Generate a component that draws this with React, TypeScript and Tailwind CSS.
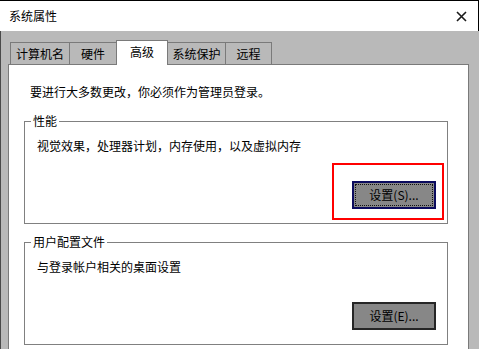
import React from "react";

const font = { fontFamily: '"Noto Sans CJK SC", "Microsoft YaHei", sans-serif' };

function Tab({ label, className }: { label: string; className: string }) {
  return (
    <div className={`flex items-center justify-center border-t border-[#7a7a7a] text-[12px] leading-[16px] text-black ${className}`}>
      {label}
    </div>
  );
}

function GroupBox({
  title,
  text,
  button,
  focused,
  className,
}: {
  title: string;
  text: string;
  button: string;
  focused?: boolean;
  className?: string;
}) {
  return (
    <div className={`relative ml-[15px] w-[424px] border border-[#808080] flex flex-col justify-between pt-[16px] pb-[14px] ${className ?? ""}`}>
      <span className="absolute -top-[9px] left-[6px] bg-white px-[2px] text-[12px] leading-[16px] text-black">
        {title}
      </span>
      <div className="pl-[12px] text-[12px] leading-[16px] text-black">{text}</div>
      <div className="flex justify-end pr-[11px]">
        {focused ? (
          <div className="w-[84px] h-[28px] border-2 border-[#0b0b5e] bg-[#878787] p-[1px]">
            <div className="w-full h-full border border-dotted border-[#111] flex items-center justify-center text-[12px] leading-[16px] text-black">
              {button}
            </div>
          </div>
        ) : (
          <div className="w-[84px] h-[28px] border-2 border-[#262626] bg-[#878787] flex items-center justify-center text-[12px] leading-[16px] text-black">
            {button}
          </div>
        )}
      </div>
      {focused && (
        <div className="absolute left-[307px] top-[41px] w-[112px] h-[57px] border-2 border-[#ff0000] pointer-events-none" />
      )}
    </div>
  );
}

export default function App() {
  return (
    <div className="w-[479px] h-[349px] overflow-hidden bg-[#b9b9b9] flex flex-col border-t border-black" style={font}>
      <div className="h-[30px] shrink-0 bg-white flex items-center justify-between pl-[9px] pr-[11px] border-r border-black">
        <span className="text-[12px] leading-[16px] text-black">系统属性</span>
        <svg width="11" height="11" viewBox="0 0 11 11" className="mt-[1px]">
          <path d="M1 1 L10 10 M10 1 L1 10" stroke="#1a1a1a" strokeWidth="1.6" />
        </svg>
      </div>
      <div className="flex-1 border-l border-[#4a4a4a] pl-[7px] pr-[9px] pt-[9px]">
        <div className="flex items-end h-[24px] pl-[2px]">
          <Tab label="计算机名" className="w-[59px] h-[22px] border-l pt-[1px]" />
          <Tab label="硬件" className="w-[47px] h-[22px] border-l pt-[1px]" />
          <Tab
            label="高级"
            className="relative z-10 w-[52px] h-[25px] -mb-[1px] border-l border-r bg-white pb-[3px]"
          />
          <Tab label="系统保护" className="w-[57px] h-[22px] pt-[1px]" />
          <Tab label="远程" className="w-[47px] h-[22px] border-l border-r pt-[1px]" />
        </div>
        <div className="w-[461px] h-[400px] bg-white border border-[#7a7a7a] pt-[19px]">
          <div className="pl-[21px] text-[12px] leading-[16px] text-black">
            要进行大多数更改，你必须作为管理员登录。
          </div>
          <GroupBox
            className="mt-[21px] h-[103px]"
            title="性能"
            text="视觉效果，处理器计划，内存使用，以及虚拟内存"
            button="设置(S)..."
            focused
          />
          <GroupBox
            className="mt-[18px] h-[103px]"
            title="用户配置文件"
            text="与登录帐户相关的桌面设置"
            button="设置(E)..."
          />
        </div>
      </div>
    </div>
  );
}
